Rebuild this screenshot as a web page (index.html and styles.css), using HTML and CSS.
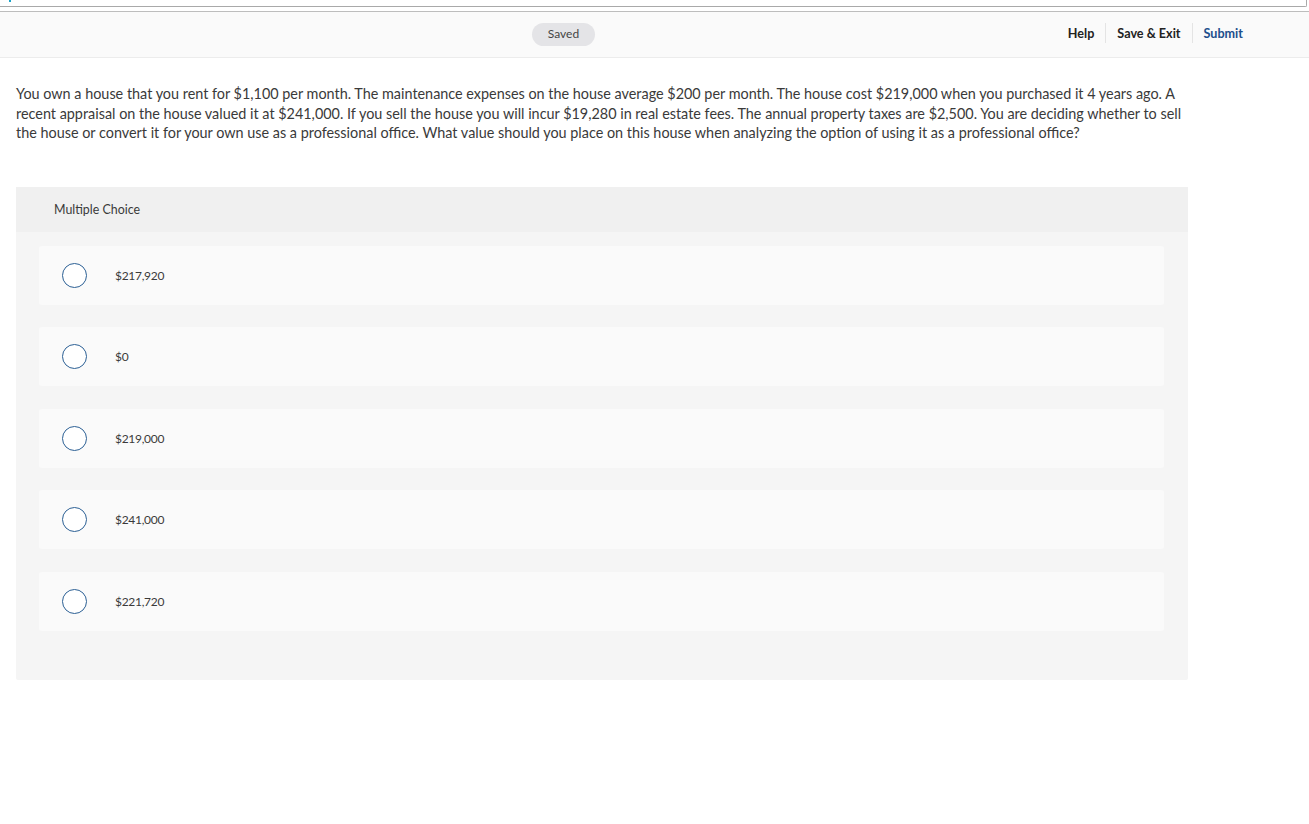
FILE: index.html
```html
<!DOCTYPE html>
<html lang="en">
<head>
<meta charset="utf-8">
<title>Question</title>
<link rel="stylesheet" href="styles.css">
</head>
<body>
<div class="topframe"><span class="tick"></span></div>
<header class="header">
  <div class="saved">Saved</div>
  <nav class="nav">
    <a class="nav-item">Help</a>
    <span class="sep"></span>
    <a class="nav-item">Save &amp; Exit</a>
    <span class="sep"></span>
    <a class="nav-item submit">Submit</a>
  </nav>
</header>
<main class="main">
  <p class="question">You own a house that you rent for $1,100 per month. The maintenance expenses on the house average $200 per month. The house cost $219,000 when you purchased it 4 years ago. A recent appraisal on the house valued it at $241,000. If you sell the house you will incur $19,280 in real estate fees. The annual property taxes are $2,500. You are deciding whether to sell the house or convert it for your own use as a professional office. What value should you place on this house when analyzing the option of using it as a professional office?</p>
  <section class="panel">
    <div class="panel-head">Multiple Choice</div>
    <div class="options">
      <label class="option"><span class="radio"></span><span class="opt-text">$217,920</span></label>
      <label class="option"><span class="radio"></span><span class="opt-text">$0</span></label>
      <label class="option"><span class="radio"></span><span class="opt-text">$219,000</span></label>
      <label class="option"><span class="radio"></span><span class="opt-text">$241,000</span></label>
      <label class="option"><span class="radio"></span><span class="opt-text">$221,720</span></label>
    </div>
  </section>
</main>
</body>
</html>
```
FILE: styles.css
```css
* { box-sizing: border-box; }
html, body { margin: 0; padding: 0; background: #fff; }
body { font-family: "Lato", "Open Sans", sans-serif; color: #333; }

.topframe {
  position: relative;
  width: 1307px;
  height: 7px;
  border-right: 1px solid #a9a9a9;
  border-bottom: 1px solid #a9a9a9;
  border-bottom-right-radius: 2px;
}
.tick {
  position: absolute;
  left: 9px;
  top: 0;
  width: 2px;
  height: 2px;
  background: #1aa3c8;
}

.header {
  margin-top: 4px;
  height: 47px;
  padding-bottom: 3px;
  background: #fafafa;
  border-top: 1px solid #bdbdbd;
  border-bottom: 1px solid #ececec;
  display: grid;
  grid-template-columns: 532px auto 1fr auto;
  align-items: center;
}
.saved {
  grid-column: 2;
  width: 63px;
  height: 23px;
  margin-top: 2px;
  border-radius: 12px;
  background: #e4e4e7;
  font-size: 12px;
  color: #444;
  display: flex;
  align-items: center;
  justify-content: center;
  padding-bottom: 1px;
}
.nav {
  grid-column: 4;
  display: flex;
  align-items: center;
  padding-right: 55px;
}
.nav-item {
  font-size: 12.6px;
  font-weight: 700;
  color: #222;
  padding: 0 11px;
}
.nav-item.submit { color: #1d4f8c; }
.sep {
  width: 1px;
  height: 20px;
  background: #e4e4e4;
}

.main { padding: 0 16px; width: 1204px; }
.question {
  margin: 26px 0 0;
  font-size: 14.4px;
  line-height: 19.5px;
  color: #3a3a3a;
}
.panel {
  margin-top: 44px;
  width: 1172px;
  background: #f5f5f5;
  border-radius: 2px;
  padding-bottom: 49px;
}
.panel-head {
  height: 45px;
  background: #f0f0f0;
  padding-left: 38px;
  display: flex;
  align-items: center;
  font-size: 12.4px;
  color: #3a3a3a;
}
.options {
  padding: 14px 24px 0 23px;
  display: flex;
  flex-direction: column;
  gap: 22.5px;
}
.option {
  height: 59px;
  background: #fafafa;
  border-radius: 3px;
  display: flex;
  align-items: center;
  padding-left: 23px;
}
.radio {
  width: 25px;
  height: 25px;
  border-radius: 50%;
  border: 1.5px solid #2b5f94;
  background: #fff;
  flex: none;
}
.opt-text {
  margin-left: 28px;
  font-size: 12px;
  letter-spacing: -0.3px;
  color: #3a3a3a;
}
```
